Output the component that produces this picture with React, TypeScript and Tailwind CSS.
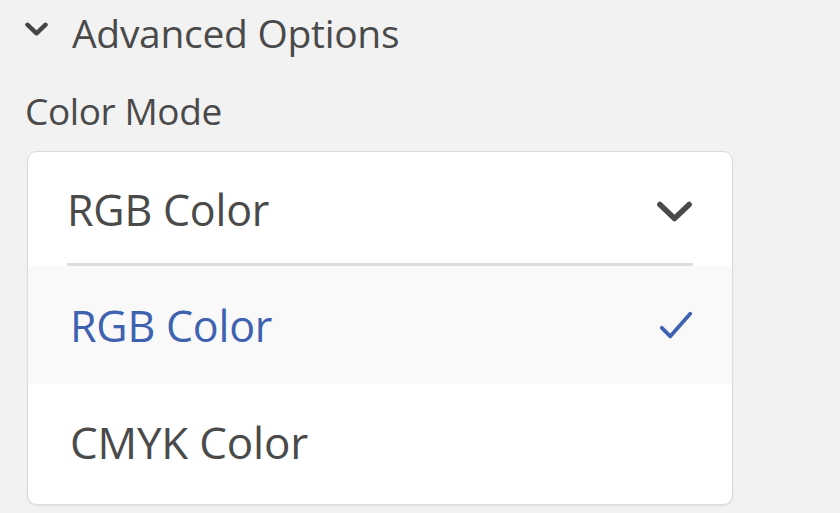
import React from 'react';

const font = { fontFamily: '"Open Sans", "Noto Sans", sans-serif' };

const Chevron = ({ className, width = 4 }: { className?: string; width?: number }) => (
  <svg viewBox="0 0 24 14" className={className} fill="none" stroke="currentColor" strokeWidth={width} strokeLinecap="round" strokeLinejoin="round">
    <path d="M2.5 2.5l9.5 9 9.5-9" />
  </svg>
);

const Check = ({ className }: { className?: string }) => (
  <svg viewBox="0 0 36 32" className={className} fill="none" stroke="currentColor" strokeWidth={4} strokeLinecap="round" strokeLinejoin="round">
    <path d="M3 19l9 9L33 4" />
  </svg>
);

export default function App() {
  return (
    <div className="w-[840px] h-[513px] bg-[#f2f2f2] text-[#4a4a4a] overflow-hidden" style={font}>
      <div className="flex flex-col pl-[25px] pt-[8px]">
        <div className="flex items-center gap-[24px] h-[48px]">
          <Chevron width={4.5} className="w-[23px] h-[14px] -mt-[6px] text-[#454545]" />
          <span className="text-[39px] leading-none tracking-[-0.3px]">Advanced Options</span>
        </div>
        <div className="mt-[36px] text-[37px] leading-none tracking-[-0.4px]">Color Mode</div>

        <div className="mt-[22px] ml-[2px] w-[706px] h-[354px] bg-white rounded-[10px] border border-[#dcdcdc] shadow-[0_1px_2px_rgba(0,0,0,0.08)] overflow-hidden flex flex-col">
          <div className="px-[39px] pt-[22px]">
            <div className="flex items-center justify-between h-[70px]">
              <span className="text-[43px] leading-none tracking-[-0.2px]">RGB Color</span>
              <Chevron width={3.6} className="w-[37px] h-[23px] mt-[4px] text-[#4a4a4a]" />
            </div>
            <div className="h-[3px] bg-[#dedede] mt-[19px]" />
          </div>
          <div className="bg-[#f9f9f9] h-[118px] px-[39px] flex items-center justify-between">
            <span className="text-[43px] leading-none tracking-[-0.2px] text-[#3e62b0] pl-[3px]">RGB Color</span>
            <Check className="w-[34px] h-[32px] text-[#3e62b0]" />
          </div>
          <div className="flex-1 px-[42px] flex items-center">
            <span className="text-[44px] leading-none tracking-[-0.2px] -mt-[4px]">CMYK Color</span>
          </div>
        </div>
      </div>
    </div>
  );
}
